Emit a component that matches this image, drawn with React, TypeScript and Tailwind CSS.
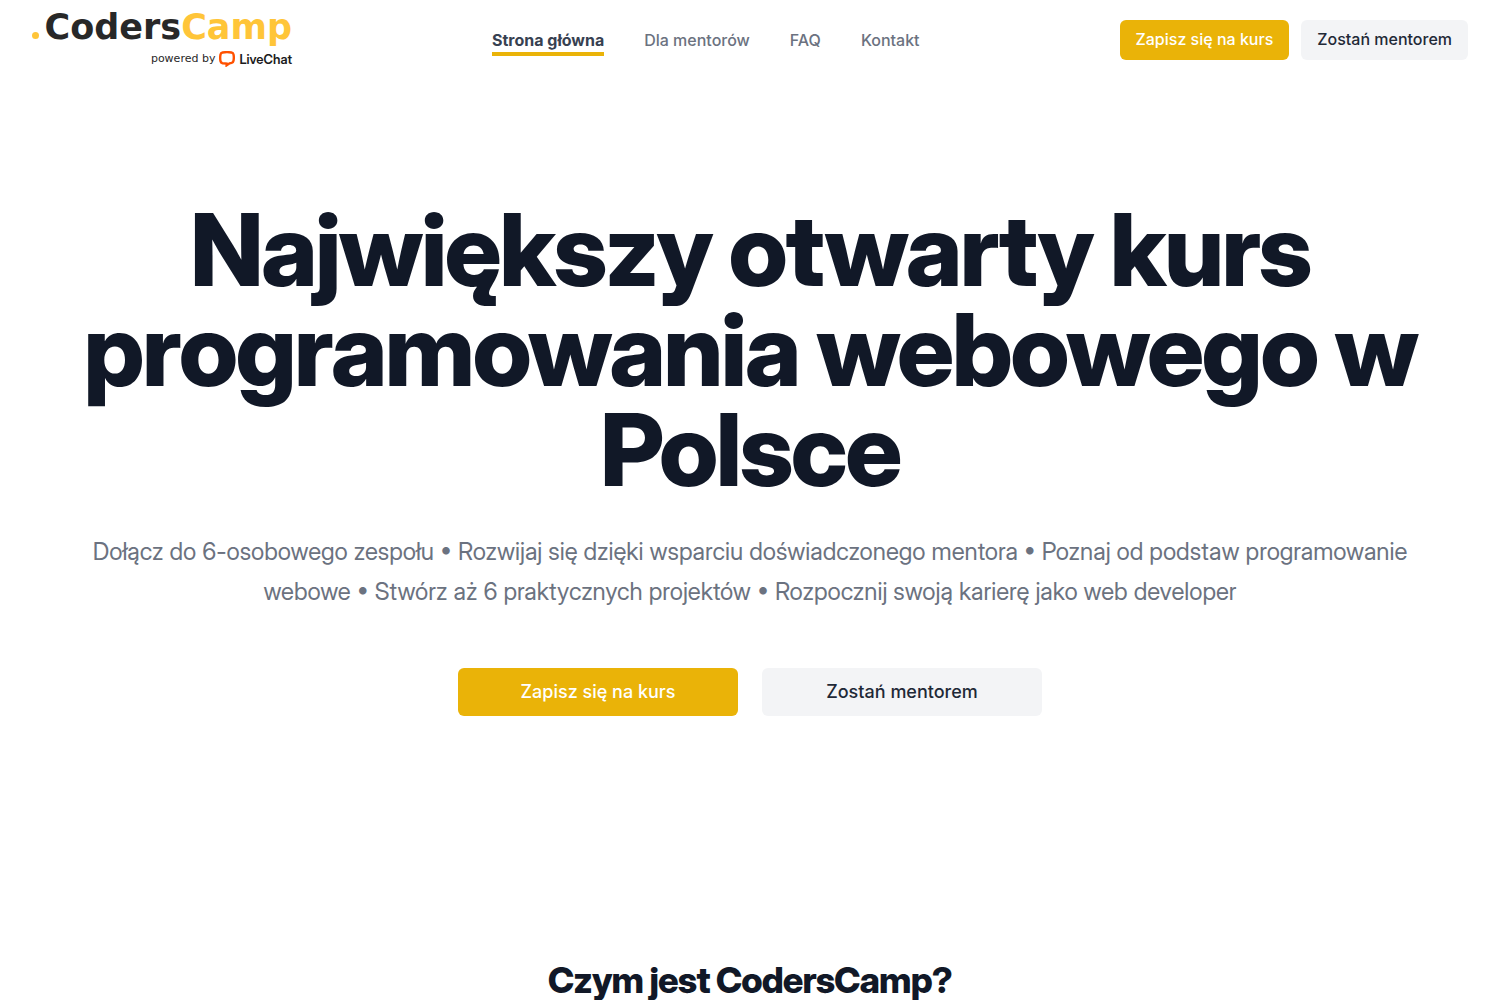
const navLinks = [
  { label: 'Strona główna', href: '#', active: true },
  { label: 'Dla mentorów', href: '#mentorzy', active: false },
  { label: 'FAQ', href: '#faq', active: false },
  { label: 'Kontakt', href: '#kontakt', active: false },
];

function Logo() {
  return (
    <a
      href="#"
      aria-label="CodersCamp powered by LiveChat"
      className="flex w-[260px] shrink-0 flex-col items-end gap-2.5"
    >
      <span className="flex w-full items-baseline justify-between font-['DejaVu_Sans',sans-serif] text-[35px] leading-7 font-bold text-[#282828]">
        <span className="h-[7px] w-[7px] rounded-full bg-[#ffc539]" />
        <span>
          Coders<span className="text-[#ffc539]">Camp</span>
        </span>
      </span>
      <span className="flex items-center gap-1 leading-4 whitespace-nowrap">
        <span className="font-['DejaVu_Sans',sans-serif] text-[11px] text-[#282828]">powered by</span>
        <svg width="16" height="16" viewBox="0 0 16 16" fill="none" aria-hidden="true">
          <path
            d="M3.6 1.5C6 1.1 10 1.1 12.4 1.5C13.7 1.7 14.3 2.3 14.5 3.4C14.9 5.4 14.9 7.8 14.5 9.8C14.3 11 13.6 11.6 12.6 11.9L10.6 12.3L7.6 14.3V12.6L3.6 12.2C2.3 12 1.7 11.4 1.5 10.3C1.1 8.2 1.1 5.4 1.5 3.4C1.7 2.3 2.3 1.7 3.6 1.5Z"
            stroke="#ff5100"
            strokeWidth="2.4"
          />
        </svg>
        <span className="font-['Inter_Display','Inter',sans-serif] text-[13px] font-semibold text-[#1b1b20]">
          LiveChat
        </span>
      </span>
    </a>
  );
}

export default function App() {
  return (
    <div className="min-h-screen bg-white font-['Inter',sans-serif] text-gray-800">
      <header className="flex h-20 items-center justify-between px-8">
        <Logo />
        <nav className="flex items-center gap-10">
          {navLinks.map((link) => (
            <a
              key={link.label}
              href={link.href}
              className={
                link.active
                  ? 'border-b-4 border-[#eab308] pt-1 font-bold text-[#374151]'
                  : 'border-b-4 border-transparent pt-1 font-medium text-[#6b7280]'
              }
            >
              {link.label}
            </a>
          ))}
        </nav>
        <div className="flex gap-3">
          <button type="button" className="h-10 rounded-md bg-[#eab308] px-4 pb-0.5 font-medium text-white">
            Zapisz się na kurs
          </button>
          <button type="button" className="h-10 rounded-md bg-[#f3f4f6] px-4 pb-0.5 font-medium text-[#1f2937]">
            Zostań mentorem
          </button>
        </div>
      </header>

      <main className="font-['Inter_Display','Inter',sans-serif]">
        <section className="px-20 pt-30 text-center">
          <h1 className="text-[100px] leading-[100px] font-extrabold tracking-tight text-[#111827]">
            Największy otwarty kurs programowania webowego w Polsce
          </h1>
          <p className="mt-8 text-2xl leading-10 text-[#6b7280]">
            Dołącz do 6-osobowego zespołu • Rozwijaj się dzięki wsparciu doświadczonego mentora • Poznaj od podstaw
            programowanie webowe • Stwórz aż 6 praktycznych projektów • Rozpocznij swoją karierę jako web developer
          </p>
          <div className="mt-14 flex justify-center gap-6 font-['Inter',sans-serif]">
            <button type="button" className="h-12 w-70 rounded-md bg-[#eab308] text-lg font-medium text-white">
              Zapisz się na kurs
            </button>
            <button type="button" className="h-12 w-70 rounded-md bg-[#f3f4f6] text-lg font-medium text-[#1f2937]">
              Zostań mentorem
            </button>
          </div>
        </section>
        <section className="pt-60 text-center">
          <h2 className="text-4xl leading-12 font-extrabold tracking-tight text-[#111827]">Czym jest CodersCamp?</h2>
        </section>
      </main>
    </div>
  );
}
